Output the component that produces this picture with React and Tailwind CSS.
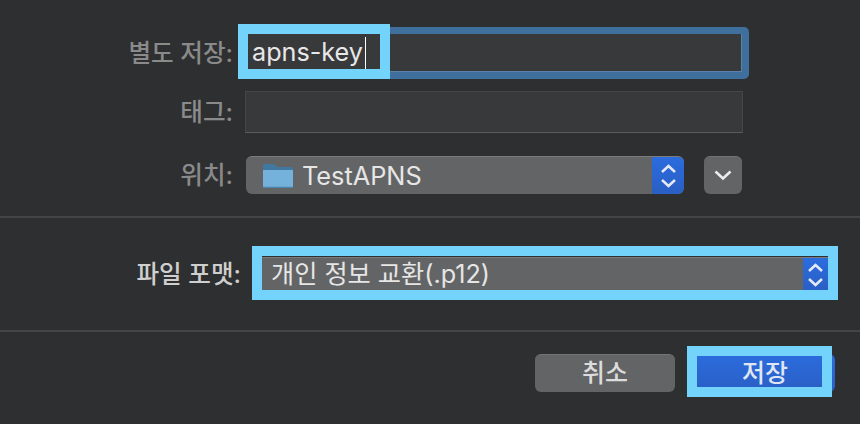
const font = { fontFamily: '"Inter", "Noto Sans CJK KR", sans-serif' };

function Chevrons() {
  return (
    <svg width="17" height="26" viewBox="0 0 17 26" fill="none" stroke="#e4e9f5" strokeWidth="2.5">
      <path d="M2 9 L8.5 3 L15 9" />
      <path d="M2 17 L8.5 23 L15 17" />
    </svg>
  );
}

function FolderIcon() {
  return (
    <svg width="30" height="24" viewBox="0 0 30 24">
      <path d="M0 2 Q0 0 2 0 H10 Q11.5 0 13 2 L14 3 H28 Q30 3 30 5 V8 H0 Z" fill="#41789f" />
      <path d="M0 6 H30 V22 Q30 24 28 24 H2 Q0 24 0 22 Z" fill="#74b1db" />
      <path d="M0 22.8 H30 V22 Q30 24 28 24 H2 Q0 24 0 22 Z" fill="#4d86ad" />
    </svg>
  );
}

function Row({ label, height, children, className }) {
  return (
    <div className={`flex items-center ${className}`} style={{ height }}>
      <span className="w-[233px] text-right text-[24.6px] font-medium leading-none text-[#8a8a8b]">{label}</span>
      {children}
    </div>
  );
}

export default function App() {
  return (
    <div className="relative flex h-[424px] w-[860px] flex-col overflow-hidden bg-[#2e2f31]" style={font}>
      <div className="flex h-[216px] flex-col pt-[27px]">
        <Row label="별도 저장:" height={52}>
          <div className="ml-[10px] h-[52px] w-[506px] rounded-[5px] border-[7px] border-l-[5px] border-[#3f6f9c]">
            <div className="flex h-full items-center border-r border-b border-[#5b82a8] bg-[#38393b] pl-[4px]">
              <span className="text-[25.2px] leading-none text-[#e8e8e8]">apns-key</span>
              <span className="ml-[2px] h-[32px] w-[1.5px] bg-white" />
            </div>
          </div>
        </Row>
        <Row label="태그:" height={42} className="mt-[12px]">
          <div className="ml-[12px] h-[42px] w-[498px] border border-[#454648] border-b-[#5b5c5e] bg-[#38393b]" />
        </Row>
        <Row label="위치:" height={38} className="mt-[23px]">
          <div className="ml-[13px] flex h-[38px] w-[438px] overflow-hidden rounded-[6px] border-t border-[#7c7c7d] bg-[#636465]">
            <div className="flex flex-1 items-center pl-[17px]">
              <FolderIcon />
              <span className="ml-[9px] text-[25.3px] leading-none text-[#e6e6e6]">TestAPNS</span>
            </div>
            <div className="flex w-[32px] items-center justify-center bg-gradient-to-b from-[#2b6cde] to-[#2a5fc4]">
              <Chevrons />
            </div>
          </div>
          <div className="ml-[20px] flex h-[38px] w-[38px] items-center justify-center rounded-[6px] border-t border-[#747475] bg-[#636465]">
            <svg width="18" height="11" viewBox="0 0 18 11" fill="none" stroke="#ececec" strokeWidth="2.6">
              <path d="M1.5 1.5 L9 8.5 L16.5 1.5" />
            </svg>
          </div>
        </Row>
      </div>

      <div className="h-[2px] bg-[#444547]" />

      <div className="flex h-[112px] items-center">
        <span className="w-[241px] text-right text-[24.6px] font-medium leading-none text-[#cfcfcf]">파일 포맷:</span>
        <div className="ml-[21px] flex h-[34px] w-[566px] border-t border-[#7c7c7d] bg-[#636465]">
          <div className="flex flex-1 items-center pl-[9px] text-[25.2px] leading-none text-[#e6e6e6]">개인 정보 교환(.p12)</div>
          <div className="flex w-[25px] items-center justify-center bg-gradient-to-b from-[#2b6cde] to-[#2a5fc4]">
            <Chevrons />
          </div>
        </div>
      </div>

      <div className="h-[2px] bg-[#444547]" />

      <div className="flex justify-end pr-[25px] pt-[22px]">
        <button className="h-[38px] w-[140px] rounded-[6px] border-t border-[#747475] bg-[#636465] text-[25px] font-medium leading-none text-[#dcdcdc]">취소</button>
        <button className="ml-[20px] h-[38px] w-[140px] rounded-[6px] bg-gradient-to-b from-[#2b6cde] to-[#2a5fc4] text-[25px] font-medium leading-none text-[#dfe5f2]">저장</button>
      </div>

      {/* annotation boxes drawn over the dialog */}
      <div className="absolute left-[238px] top-[24px] h-[55px] w-[152px] border-[10px] border-[#73d3fb]" />
      <div className="absolute left-[252px] top-[246px] h-[54px] w-[586px] border-[10px] border-[#73d3fb]" />
      <div className="absolute left-[687px] top-[346px] h-[51px] w-[145px] border-[10px] border-[#73d3fb]" />
    </div>
  );
}
